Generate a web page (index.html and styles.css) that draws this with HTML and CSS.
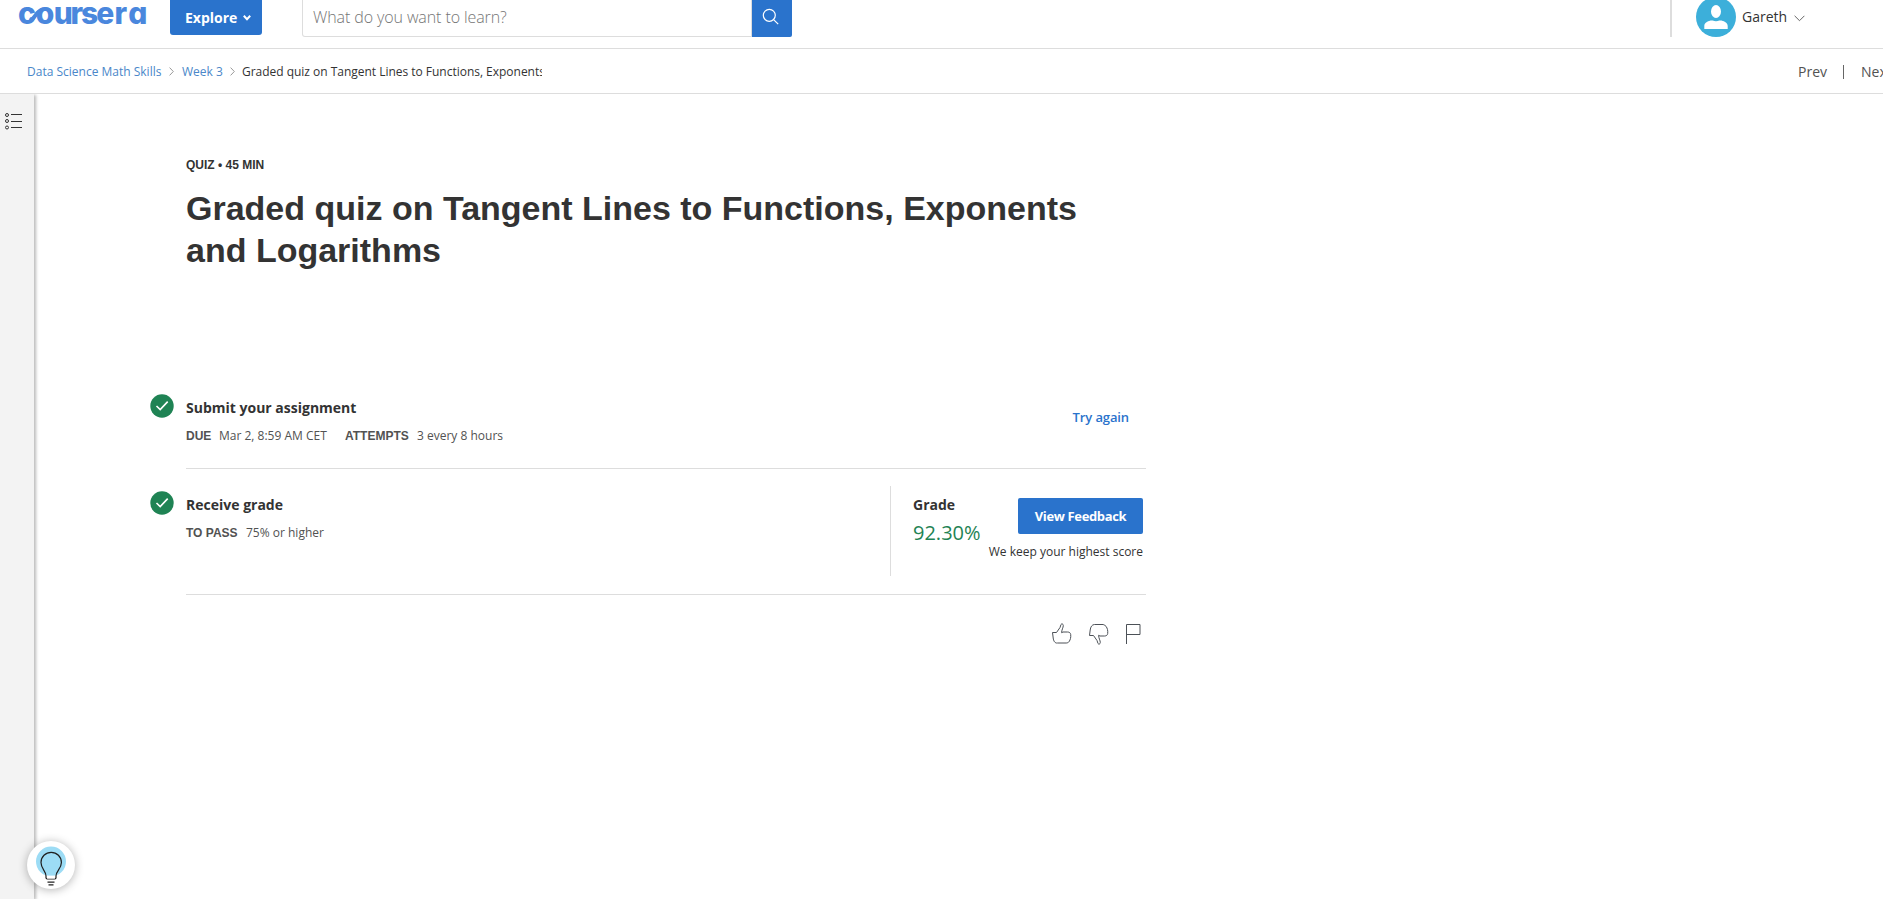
FILE: index.html
```html
<!DOCTYPE html>
<html lang="en">
<head>
<meta charset="utf-8">
<title>Graded quiz | Coursera</title>
<link rel="stylesheet" href="styles.css">
</head>
<body>
<header class="topbar">
  <svg class="logo" width="134" height="30" viewBox="0 0 134 30" role="img" aria-label="coursera">
    <text class="logo-text" y="24" x="2 19.700 37.800 54.600 65 80.300 98.600 112.300">coursera</text>
    <path class="logo-link" d="M14 20.500C19 19 20 11 26 10"/>
  </svg>
  <button class="explore"><span>Explore</span>
    <svg width="8" height="6" viewBox="0 0 8 6"><path d="M.8.800l3.200 3.400L7.200.800" fill="none" stroke="#fff" stroke-width="2"/></svg>
  </button>
  <div class="search">
    <div class="search-field">What do you want to learn?</div>
    <div class="search-button">
      <svg width="18" height="18" viewBox="0 0 18 18" fill="none" stroke="#fff" stroke-width="1.200"><circle cx="7.300" cy="7.300" r="6"/><path d="M11.600 11.600L16.200 16.200"/></svg>
    </div>
  </div>
  <div class="account">
    <svg class="avatar" width="40" height="40" viewBox="0 0 40 40"><circle cx="20" cy="20" r="20" fill="#3cafda"/><ellipse cx="20" cy="14.500" rx="5" ry="6.500" fill="#fff"/><path d="M8.300 32v-3c0-3 2.700-4.500 6.200-5.500h2.200c1.800 1.100 4.800 1.100 6.600 0h2.200c3.500 1 6.200 2.500 6.200 5.500v3z" fill="#fff"/></svg>
    <span class="username">Gareth</span>
    <svg width="11" height="7" viewBox="0 0 11 7"><path d="M.6.800l4.900 4.900L10.400.800" fill="none" stroke="#666" stroke-width="1"/></svg>
  </div>
</header>
<nav class="crumbs">
  <a class="crumb-course">Data Science Math Skills</a>
  <svg class="sep" width="5" height="9" viewBox="0 0 5 9"><path d="M.6.600l3.700 3.900L.6 8.400"/></svg>
  <a class="crumb-week">Week 3</a>
  <svg class="sep" width="5" height="9" viewBox="0 0 5 9"><path d="M.6.600l3.700 3.900L.6 8.400"/></svg>
  <span class="crumb-current">Graded quiz on Tangent Lines to Functions, Exponents and Logarithms</span>
  <div class="pager"><span>Prev</span><i></i><span>Next</span></div>
</nav>
<div class="body">
  <aside class="rail">
    <svg width="18" height="18" viewBox="0 0 18 18" fill="none" stroke="#333"><circle cx="2" cy="3" r="1.500"/><circle cx="2" cy="9" r="1.500"/><circle cx="2" cy="15.500" r="1.500"/><path d="M6 2.500h11M6 9.500h11M6 15.500h11"/></svg>
  </aside>
  <main class="content">
    <div class="kicker">QUIZ • 45 MIN</div>
    <h1>Graded quiz on Tangent Lines to Functions, Exponents<br>and Logarithms</h1>
    <section class="row submit">
      <svg class="check" width="24" height="24" viewBox="0 0 24 24"><circle cx="12" cy="12" r="11.700" fill="#1f8354"/><path d="M6.500 12l3.700 3.600 7.500-8" fill="none" stroke="#fff" stroke-width="1.600"/></svg>
      <div class="details">
        <h2>Submit your assignment</h2>
        <p><b class="l-due">DUE</b><span class="v-due">Mar 2, 8:59 AM CET</span><b class="l-att">ATTEMPTS</b><span>3 every 8 hours</span></p>
      </div>
      <a class="try">Try again</a>
    </section>
    <section class="row receive">
      <svg class="check" width="24" height="24" viewBox="0 0 24 24"><circle cx="12" cy="12" r="11.700" fill="#1f8354"/><path d="M6.500 12l3.700 3.600 7.500-8" fill="none" stroke="#fff" stroke-width="1.600"/></svg>
      <div class="details">
        <h2>Receive grade</h2>
        <p><b class="l-pass">TO PASS</b><span>75% or higher</span></p>
      </div>
      <div class="grade">
        <div class="score"><h2>Grade</h2><strong>92.30%</strong></div>
        <div class="feedback"><button>View Feedback</button><span>We keep your highest score</span></div>
      </div>
    </section>
    <div class="reactions">
      <svg width="20" height="22" viewBox="0 0 20 22"><path d="M.5 9.500h4L8 4.500l1-3c.5-1 2.300-.8 2.300 1 0 2-1.700 4.500-1.700 7.200L11 9h4.500c2 0 3 1 3.200 2.500.3 3-.3 5-1.500 7-.8 1-1.800 1.500-3 1.500H5.500C3 20.500 1.500 18 1.200 15z"/></svg>
      <svg width="20" height="22" viewBox="0 0 20 22"><path d="M.5 12.500h4L8 17.500l1 3c.5 1 2.300.8 2.300-1 0-2-1.700-4.500-1.700-7.200L11 13h4.500c2 0 3-1 3.200-2.500.3-3-.3-5-1.500-7-.8-1-1.800-1.500-3-2H5.500C3 1.500 1.500 4 1.200 7z"/></svg>
      <svg class="flag" width="17" height="22" viewBox="0 0 17 22"><path d="M1.500 21V1.500h13.500v10H1.500"/></svg>
    </div>
  </main>
</div>
<div class="tip">
  <svg width="48" height="48" viewBox="0 0 48 48"><circle cx="24" cy="20.500" r="15" fill="#9cdcf5"/><path d="M19 37v-2c0-5-5-7-5-13.500a10.200 10.200 0 0 1 20.400 0C34.400 28 29 30 29 35v2l-1 1h-8z" fill="none" stroke="#1f1f1f" stroke-width="1.200"/><path d="M20 34.600h8v2.900h-8z" fill="#fff"/><path d="M20.500 41.200h7M21.500 43.800h5" stroke="#222" stroke-width="1.300"/></svg>
</div>
</body>
</html>
```
FILE: styles.css
```css
* { box-sizing: border-box; }
body { margin: 0; width: 1883px; height: 899px; overflow: hidden; background: #fff; color: #333; font-family: "Open Sans", "Noto Sans", sans-serif; }
h1, h2, p { margin: 0; }
svg { display: block; flex: none; }
button { border: 0; padding: 0; font: inherit; color: #fff; background: #2a73cc; border-radius: 2px; }

.topbar { display: flex; align-items: flex-start; height: 49px; border-bottom: 1px solid #ddd; padding-left: 16px; }
.logo { overflow: visible; }
.logo-text { font-family: Inter, sans-serif; font-weight: 800; font-size: 30px; font-feature-settings: "cv11" 1; fill: #4a87dd; }
.logo-link { fill: none; stroke: #4a87dd; stroke-width: 4; }
.explore { display: flex; align-items: center; gap: 6px; width: 92px; height: 35px; margin-left: 20px; padding-left: 15px; font-size: 14px; font-weight: 700; border-radius: 0 0 3px 3px; }
.search { display: flex; margin-left: 40px; }
.search-field { width: 450px; height: 37px; border: 1px solid #ddd; border-top: 0; border-radius: 0 0 0 3px; padding-left: 10px; font: 300 16px/35px "Open Sans", sans-serif; letter-spacing: -.1px; color: #757575; }
.search-button { width: 40px; height: 37px; background: #2a73cc; border-radius: 0 0 2px 0; padding: 8px 0 0 10px; }
.account { display: flex; align-items: flex-start; height: 37px; margin-left: 878px; border-left: 2px solid #ddd; padding-left: 24px; }
.avatar { margin-top: -3px; }
.username { font-size: 14px; line-height: 34px; width: 46px; margin: 0 6px; white-space: nowrap; }
.account svg:last-child { margin-top: 15px; }

.crumbs { display: flex; align-items: center; height: 45px; border-bottom: 1px solid #ddd; padding-left: 27px; font-size: 12px; white-space: nowrap; }
.crumbs a { color: #4a87c9; }
.crumb-course { width: 135px; }
.crumb-week { width: 41px; }
.sep { margin: 1px 7px 0; fill: none; stroke: #999; }
.crumb-course + .sep { margin-right: 8px; }
.crumb-current { width: 300px; overflow: hidden; letter-spacing: -.02px; }
.pager { display: flex; align-items: center; margin-left: auto; width: 85px; overflow: hidden; font-size: 14px; color: #525252; }
.pager i { flex: none; width: 1px; height: 14px; background: #666; margin: 1px 17px 0 16px; }

.body { display: flex; height: 805px; }
.rail { width: 34px; flex: none; background: #f3f3f3; box-shadow: 2px 1px 3px rgba(0,0,0,.27); clip-path: inset(0 -8px 0 0); padding: 18px 0 0 5px; }
.content { width: 960px; margin-left: 152px; }
.kicker { margin-top: 61px; font: bold 12px/20px "Liberation Sans", Arial, sans-serif; }
h1 { margin-top: 12px; font: bold 34px/42px "Liberation Sans", Arial, sans-serif; white-space: nowrap; }
h2 { font-size: 14px; line-height: 24px; font-weight: 700; white-space: nowrap; }
.row { display: flex; border-bottom: 1px solid #ddd; }
.check { margin-left: -36px; margin-right: 12px; }
.details { flex: 1; }
.details p { display: flex; font-size: 12px; line-height: 20px; margin-top: 6px; color: #525252; white-space: nowrap; }
.details b { font: bold 12px/20px "Liberation Sans", Arial, sans-serif; }
.l-due { width: 33px; }
.v-due { width: 126px; }
.l-att { width: 72px; }
.l-pass { width: 60px; }
.submit { height: 74px; margin-top: 124px; }
.submit .check { margin-top: -1px; }
.submit .details { padding-top: 1px; }
.try { margin: 12px 17px 0 0; font-size: 13px; line-height: 20px; font-weight: 600; letter-spacing: -.12px; color: #2a73cc; white-space: nowrap; }
.receive { height: 126px; padding-top: 17px; }
.receive .check { margin-top: 5px; }
.receive .details { padding-top: 7px; }
.grade { display: flex; width: 256px; height: 90px; border-left: 1px solid #ddd; padding-left: 22px; padding-right: 3px; }
.score { width: 67px; padding-top: 7px; }
.score strong { display: block; font-size: 20px; line-height: 32px; font-weight: 400; color: #1f8354; white-space: nowrap; }
.feedback { display: flex; flex-direction: column; align-items: flex-end; margin-left: auto; padding-top: 12px; }
.feedback button { width: 125px; height: 36px; font-size: 13px; font-weight: 700; letter-spacing: -.35px; }
.feedback span { margin-top: 8px; font-size: 12px; line-height: 20px; white-space: nowrap; }
.reactions { display: flex; justify-content: flex-end; gap: 17px; margin: 28px 4px 0 0; }
.reactions svg { fill: none; stroke: #4c5157; stroke-width: 1; }
.reactions .flag { margin-left: -1px; }

.tip { position: absolute; left: 27px; top: 841px; width: 48px; height: 48px; border-radius: 50%; background: #fff; box-shadow: 0 1px 10px rgba(0,0,0,.3); }
```
